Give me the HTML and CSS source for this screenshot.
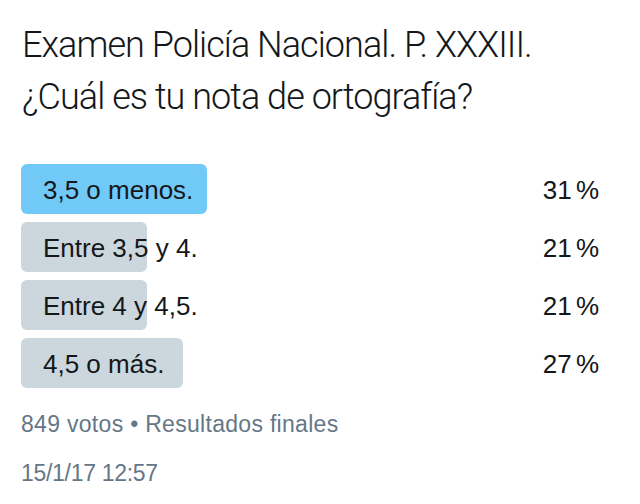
FILE: index.html
```html
<!DOCTYPE html>
<html lang="es">
<head>
<meta charset="utf-8">
<link rel="stylesheet" href="styles.css">
</head>
<body>
<div class="card">
  <h1 class="title">Examen Policía Nacional. P. XXXIII.<br>¿Cuál es tu nota de ortografía?</h1>
  <div class="poll">
    <div class="option">
      <div class="bar win" style="width:31%"></div>
      <span class="label">3,5 o menos.</span>
      <span class="pct">31 %</span>
    </div>
    <div class="option">
      <div class="bar" style="width:21%"></div>
      <span class="label">Entre 3,5 y 4.</span>
      <span class="pct">21 %</span>
    </div>
    <div class="option">
      <div class="bar" style="width:21%"></div>
      <span class="label">Entre 4 y 4,5.</span>
      <span class="pct">21 %</span>
    </div>
    <div class="option">
      <div class="bar" style="width:27%"></div>
      <span class="label">4,5 o más.</span>
      <span class="pct">27 %</span>
    </div>
  </div>
  <div class="meta">849 votos • Resultados finales</div>
  <div class="date">15/1/17 12:57</div>
</div>
</body>
</html>
```
FILE: styles.css
```css
html, body {
  margin: 0;
  padding: 0;
  background: #ffffff;
}
body {
  font-family: "Liberation Sans", Arial, sans-serif;
  color: #14171a;
}
.card {
  padding: 19px 19px 0 21px;
}
.title {
  margin: 0;
  font-family: Roboto, "Liberation Sans", sans-serif;
  font-weight: 300;
  font-size: 36px;
  line-height: 52px;
  letter-spacing: -0.95px;
  color: #14171a;
  padding-left: 1px;
}
.poll {
  margin-top: 41px;
  display: flex;
  flex-direction: column;
  gap: 8px;
}
.option {
  position: relative;
  height: 50px;
  box-sizing: border-box;
  display: flex;
  align-items: center;
  justify-content: space-between;
  padding: 3px 22px 0 22px;
  font-size: 26px;
}
.bar {
  position: absolute;
  left: 0;
  top: 0;
  bottom: 0;
  background: #ccd6dd;
  border-radius: 6px;
}
.bar.win {
  background: #71c9f8;
}
.label, .pct {
  position: relative;
}
.pct {
  word-spacing: -3px;
}
.meta {
  margin-top: 23px;
  font-size: 23px;
  letter-spacing: 0.3px;
  color: #657786;
  line-height: 26px;
}
.date {
  margin-top: 23px;
  font-size: 23px;
  letter-spacing: -0.3px;
  color: #657786;
  line-height: 26px;
}
```
